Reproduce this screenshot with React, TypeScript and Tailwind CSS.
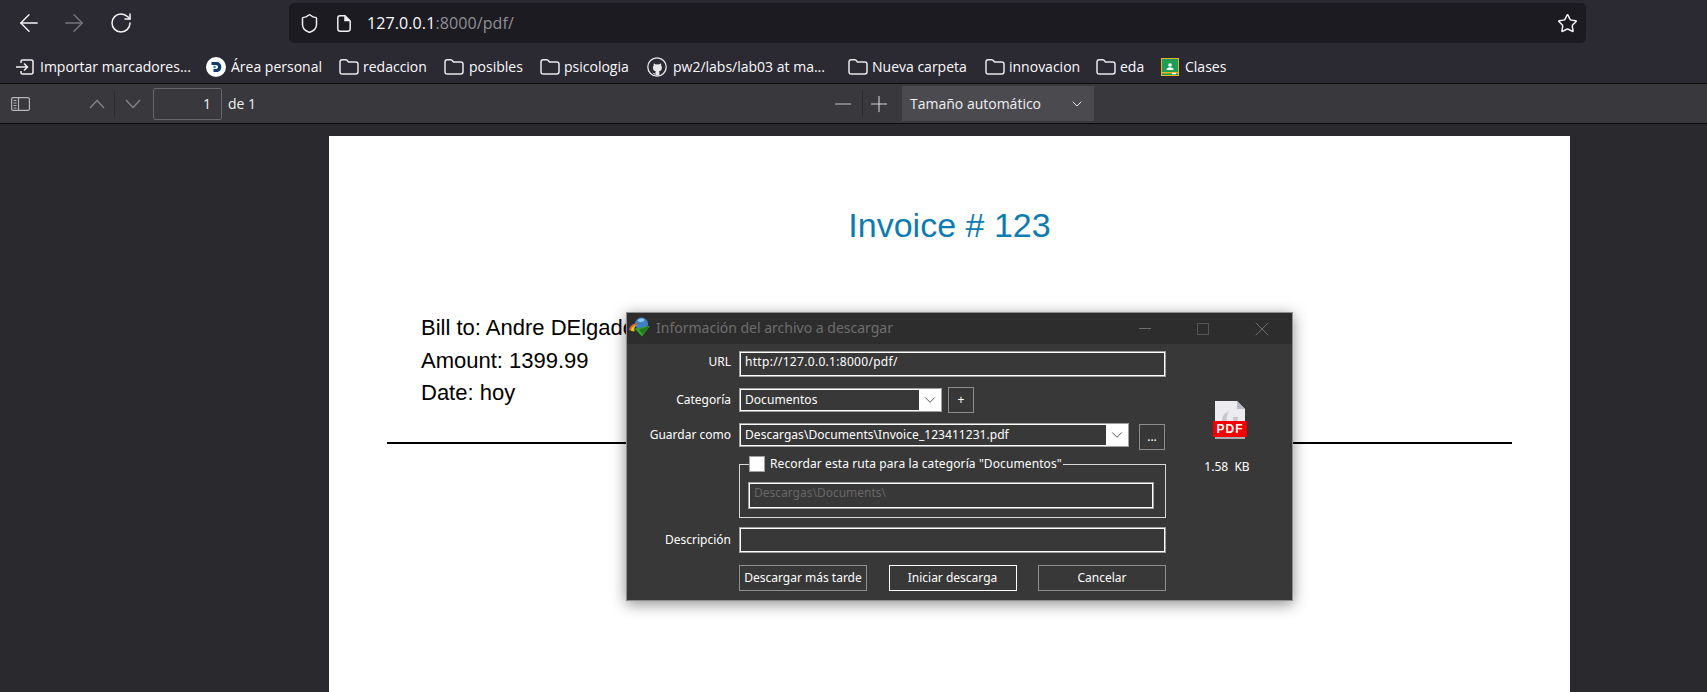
import { ArrowLeft, ArrowRight, ChevronDown, Minus, Plus, RotateCw, Shield, Star, X } from 'lucide-react'

const uiFont = "font-['Open_Sans','Noto_Sans',sans-serif]"
const dlgFont = "font-['Noto_Sans','DejaVu_Sans',sans-serif]"

function FolderIcon() {
  return (
    <svg width="20" height="18" viewBox="0 0 20 18" fill="none" stroke="#e8e8ea" strokeWidth="1.5" className="shrink-0">
      <path d="M1 4c0-1.4.8-2.2 2.2-2.2h3.6c.9 0 1.3.4 1.9 1.2l.8 1.1h7.2c1.4 0 2.3.9 2.3 2.2v7.5c0 1.4-.9 2.2-2.3 2.2H3.2C1.8 16 1 15.2 1 13.8z" />
    </svg>
  )
}

function ImportIcon() {
  return (
    <svg width="18" height="16" viewBox="0 0 18 16" fill="none" stroke="#f0f0f2" strokeWidth="1.5" className="shrink-0">
      <path d="M0 8h11M8 4.5 11.5 8 8 11.5" />
      <path d="M5 4V2.5C5 1.500 5.700 1 6.500 1h8.700c1 0 1.800.7 1.800 1.700v10.600c0 1-.8 1.700-1.800 1.700H6.500C5.700 15 5 14.500 5 13.500V12" />
    </svg>
  )
}

function DIcon() {
  return (
    <svg width="20" height="20" viewBox="0 0 20 20" className="shrink-0">
      <circle cx="10" cy="10" r="10" fill="#fff" />
      <path d="M5.500 5h4.800c3 0 5 2 5 5s-2 5-5 5H7.500v-3h2.500c1.300 0 2-.8 2-2s-.7-2-2-2H5.500z" fill="#123a6b" />
      <circle cx="8.500" cy="10" r="1.300" fill="#2e8bc9" />
    </svg>
  )
}

function GithubIcon() {
  return (
    <svg width="20" height="20" viewBox="0 0 20 20" className="shrink-0">
      <circle cx="10" cy="10" r="9.200" fill="none" stroke="#e8e8ea" strokeWidth="1.300" />
      <path d="M7.600 18.500v-2.600c-2 .4-2.500-1-2.700-1.500M12.400 18.500v-3c0-.6-.2-1-.5-1.300 1.800-.3 3-1.300 3-3.500 0-.9-.3-1.600-.8-2.200.2-.6.100-1.300-.1-1.900-.7 0-1.400.3-2 .8a7 7 0 0 0-3.200 0c-.6-.5-1.300-.8-2-.8-.2.6-.3 1.300-.1 1.900-.5.600-.8 1.300-.8 2.200 0 2.200 1.200 3.200 3 3.500-.3.300-.5.700-.5 1.300v3z" fill="#e8e8ea" />
    </svg>
  )
}

function ClassroomIcon() {
  return (
    <svg width="18" height="18" viewBox="0 0 18 18" className="shrink-0">
      <rect x="0.500" y="0.500" width="17" height="17" fill="#1f9d55" stroke="#e6b422" />
      <rect x="1" y="14" width="16" height="1.500" fill="#e6b422" />
      <circle cx="9" cy="7" r="1.800" fill="#fff" />
      <path d="M5.500 12c0-1.800 1.500-2.700 3.500-2.700s3.500.9 3.500 2.700z" fill="#fff" />
      <rect x="11" y="14.800" width="4" height="1.500" fill="#fff" />
    </svg>
  )
}

function PageIcon() {
  return (
    <svg width="14" height="17" viewBox="0 0 14 17" fill="none" stroke="#f0f0f2" strokeWidth="1.500">
      <path d="M3 .8h5l5.200 5.200v7.500c0 1.500-.9 2.700-2.400 2.700H3C1.600 16.200.8 15 .8 13.500V3C.8 1.700 1.600.8 3 .8z" />
      <path d="M8 1v4.500h5" fill="#f0f0f2" />
    </svg>
  )
}

function SidebarIcon() {
  return (
    <svg width="19" height="14" viewBox="0 0 19 14" fill="none" stroke="#b5b5b8" strokeWidth="1.200">
      <rect x="0.600" y="0.600" width="17.800" height="12.800" rx="1.500" />
      <path d="M7.500 1v12M2.500 3.500h3M2.500 6h3M2.500 8.500h3M2.500 11h3" />
    </svg>
  )
}

function PagerChevron({ up = false }: { up?: boolean }) {
  return (
    <svg width="16" height="10" viewBox="0 0 16 10" fill="none" stroke="#85858a" strokeWidth="1.300" className="shrink-0">
      <path d={up ? 'M1 9l7-7.500L15 9' : 'M1 1l7 7.500L15 1'} />
    </svg>
  )
}

// icono de IDM
function IdmIcon() {
  return (
    <svg width="22" height="20" viewBox="0 0 22 20" className="shrink-0">
      <circle cx="12.500" cy="7" r="6.500" fill="#3f7fc4" />
      <path d="M8.500 3.500c2-2.500 6-2.500 7-.5-1 2-5 3-7 .5z" fill="#8fc7ef" />
      <path d="M0 13C1 7.500 5 6 10 6.500 6 8 4 10 4 14z" fill="#e0662c" />
      <path d="M2 14C2.500 10 5 8.500 7.500 8 5.500 9.500 5 11 5.500 14.500z" fill="#e6c62c" />
      <path d="M5.500 11.500 21 9 13 19.500z" fill="#3aa02f" />
      <path d="M10 12.500 20.500 9.300 14 17.500z" fill="#247a1f" />
    </svg>
  )
}

function PdfFileIcon() {
  return (
    <div className="relative w-[34px] h-[38px]">
      <svg width="34" height="38" viewBox="0 0 34 38" className="absolute inset-0">
        <path d="M2 0h22l8 8v30H2z" fill="#ececf0" />
        <path d="M24 0v8h8z" fill="#b9bcc4" />
        <path d="M9 20c0-5 3-9 7-9 -2 2-2.500 5-2 9zM25 16c0 5-3 8-7 9 2-2 2.500-5 2-9z" fill="#c8c8cc" />
        <rect x="2" y="36" width="30" height="2" fill="#a9a9ae" />
      </svg>
      <div className="absolute left-0 top-[20px] w-[34px] h-[16px] bg-[#f40000] flex items-center justify-center text-white text-[12px] leading-none font-bold tracking-[1px] font-['Liberation_Sans',sans-serif]">
        PDF
      </div>
    </div>
  )
}

const bookmarks = [
  { icon: <ImportIcon />, label: 'Importar marcadores...', box: 'w-[190px] gap-[6px]' },
  { icon: <DIcon />, label: 'Área personal', box: 'w-[133px] gap-[5px]' },
  { icon: <FolderIcon />, label: 'redaccion', box: 'w-[105px] gap-[4px]' },
  { icon: <FolderIcon />, label: 'posibles', box: 'w-[96px] gap-[5px]' },
  { icon: <FolderIcon />, label: 'psicologia', box: 'w-[107px] gap-[4px]' },
  { icon: <GithubIcon />, label: 'pw2/labs/lab03 at ma...', box: 'w-[201px] gap-[6px]' },
  { icon: <FolderIcon />, label: 'Nueva carpeta', box: 'w-[137px] gap-[4px]' },
  { icon: <FolderIcon />, label: 'innovacion', box: 'w-[111px] gap-[4px]' },
  { icon: <FolderIcon />, label: 'eda', box: 'w-[65px] gap-[4px]' },
  { icon: <ClassroomIcon />, label: 'Clases', box: 'w-[80px] gap-[6px]' },
]

function BrowserBar() {
  return (
    <div className={`bg-[#2b2a33] h-[83px] text-[#fbfbfe] ${uiFont}`}>
      <div className="h-[46px] pt-[3px] flex">
        <div className="w-[289px] flex items-center pl-[15px] h-[40px]">
          <ArrowLeft size={28} strokeWidth={1.200} color="#f4f4f6" />
          <ArrowRight size={28} strokeWidth={1.200} color="#77767c" className="ml-[17px]" />
          <RotateCw size={24} strokeWidth={1.500} color="#f4f4f6" className="ml-[21px]" />
        </div>
        <div className="w-[1297px] h-[40px] bg-[#1c1b22] rounded-[5px] flex items-center pl-[10px] pr-[8px]">
          <Shield size={21} strokeWidth={1.700} color="#f0f0f2" />
          <div className="ml-[17px]"><PageIcon /></div>
          <span className="ml-[16px] text-[16px] tracking-[0.1px]">
            127.0.0.1<span className="text-[#8f8f94]">:8000/pdf/</span>
          </span>
          <div className="ml-auto"><Star size={21} strokeWidth={1.700} color="#f4f4f6" /></div>
        </div>
      </div>
      <div className="h-[37px] flex items-center pl-[16px] pt-[4px] text-[14px]">
        {bookmarks.map((b) => (
          <div key={b.label} className={`flex items-center shrink-0 whitespace-nowrap ${b.box}`}>
            {b.icon}
            <span>{b.label}</span>
          </div>
        ))}
      </div>
    </div>
  )
}

function PdfToolbar() {
  return (
    <div className={`h-[41px] bg-[#38383d] border-y border-[#0c0c0d] flex items-center text-[#f0f0f2] text-[14px] ${uiFont}`}>
      <div className="ml-[11px] w-[78px]"><SidebarIcon /></div>
      <PagerChevron up />
      <div className="w-px h-[25px] bg-[#2a2a2e] ml-[9px] mr-[10px]" />
      <PagerChevron />
      <div className="ml-[12px] w-[69px] h-[32px] bg-[#38383d] border border-[#66666a] rounded-[2px] flex items-center justify-end pr-[10px]">1</div>
      <span className="w-[608px] pl-[6px]">de 1</span>
      <Minus size={26} strokeWidth={1} color="#c4c4c7" />
      <div className="w-px h-[25px] bg-[#2a2a2e] ml-[6px] mr-[3px]" />
      <Plus size={26} strokeWidth={1} color="#d6d6d8" />
      <div className="ml-[10px] w-[192px] h-[35px] bg-[#4a4a4f] flex items-center pl-[8px] pr-[9px] justify-between">
        <span>Tamaño automático</span>
        <ChevronDown size={16} strokeWidth={1.500} color="#f0f0f2" />
      </div>
    </div>
  )
}

function Field({ className = '', children }: { className?: string; children?: React.ReactNode }) {
  return (
    <div className={`border border-[#a0a0a0] bg-white p-px ${className}`}>
      <div className="bg-[#383838] h-full w-full px-[4px] leading-[16px] pt-px">{children}</div>
    </div>
  )
}

function Combo({ className, text }: { className: string; text: string }) {
  return (
    <div className={`border border-[#a0a0a0] bg-white p-px flex ${className}`}>
      <div className="bg-[#383838] h-full grow px-[4px] leading-[20px] tracking-[0.05px]">{text}</div>
      <div className="w-[21px] h-full flex items-center justify-center">
        <ChevronDown size={18} strokeWidth={1} color="#222" />
      </div>
    </div>
  )
}

function DlgButton({ className = '', children }: { className?: string; children: React.ReactNode }) {
  return <div className={`border border-[#8e8e8e] h-[26px] flex items-center justify-center ${className}`}>{children}</div>
}

function Dialog() {
  return (
    <div className={`absolute left-[626px] top-[312px] w-[667px] h-[289px] bg-[#383838] border border-[#8f8f8f] shadow-[0_3px_14px_rgba(0,0,0,0.45)] text-white text-[12px] ${dlgFont}`}>
      <div className="h-[31px] bg-[#2d2d2d] flex items-center relative">
        <div className="absolute left-[2px] top-[4px]"><IdmIcon /></div>
        <span className="ml-[29px] -mt-[2px] text-[14px] text-[#6e6e6e]">Información del archivo a descargar</span>
        <div className="ml-auto flex items-center text-[#6e6e6e]">
          <div className="w-[12px] h-px bg-[#6e6e6e] mr-[46px]" />
          <div className="w-[12px] h-[12px] border border-[#555] mr-[41px]" />
          <X size={24} strokeWidth={1} className="mr-[18px]" />
        </div>
      </div>
      <div className="flex pt-[7px]">
        <div className="w-[539px] flex flex-col">
          <div className="flex">
            <div className="w-[104px] text-right leading-[22px]">URL</div>
            <Field className="ml-[8px] w-[427px] h-[26px] tracking-[0.3px]">http://127.0.0.1:8000/pdf/</Field>
          </div>
          <div className="flex mt-[10px] items-center">
            <div className="w-[104px] text-right">Categoría</div>
            <Combo className="ml-[8px] w-[203px] h-[24px]" text="Documentos" />
            <DlgButton className="ml-[6px] w-[26px]">+</DlgButton>
          </div>
          <div className="flex mt-[10px] items-start">
            <div className="w-[104px] text-right leading-[24px]">Guardar como</div>
            <Combo className="ml-[8px] w-[390px] h-[24px]" text="Descargas\Documents\Invoice_123411231.pdf" />
            <DlgButton className="ml-[10px] mt-px w-[26px]">...</DlgButton>
          </div>
          <fieldset className="ml-[112px] mt-[6px] w-[427px] h-[62px] border border-[#d8d8d8] px-[8px] pb-[8px]">
            <legend className="flex items-center h-[16px] pr-px ml-px">
              <div className="w-[16px] h-[16px] bg-white border border-[#a0a0a0]" />
              <span className="ml-[5px] tracking-[0.1px]">Recordar esta ruta para la categoría "Documentos"</span>
            </legend>
            <Field className="mt-[10px] w-[406px] h-[27px] text-[#666]">Descargas\Documents\</Field>
          </fieldset>
          <div className="flex mt-[9px] items-center">
            <div className="w-[104px] text-right">Descripción</div>
            <Field className="ml-[8px] w-[427px] h-[26px]" />
          </div>
          <div className="flex ml-[112px] mt-[12px] justify-between w-[427px]">
            <DlgButton className="w-[128px]">Descargar más tarde</DlgButton>
            <DlgButton className="w-[128px] border-white">Iniciar descarga</DlgButton>
            <DlgButton className="w-[128px]">Cancelar</DlgButton>
          </div>
        </div>
        <div className="w-[126px] flex flex-col items-center pt-[50px]">
          <div className="ml-[2px]"><PdfFileIcon /></div>
          <div className="mt-[19px] -ml-[4px] whitespace-pre">1.58  KB</div>
        </div>
      </div>
    </div>
  )
}

function PdfPage() {
  return (
    <div className="w-[1241px] ml-[329px] h-[568px] bg-white px-[58px] text-black font-['Liberation_Sans',Arial,sans-serif]">
      <h1 className="pt-[69px] text-center text-[34px] leading-[40px] text-[#0e7cb0]">Invoice # 123</h1>
      <div className="pl-[34px] mt-[67px] text-[22px] leading-[32.500px]">
        <p>Bill to: Andre DElgado</p>
        <p>Amount: 1399.99</p>
        <p>Date: hoy</p>
      </div>
      <hr className="mt-[32px] border-t-2 border-black" />
    </div>
  )
}

export default function App() {
  return (
    <div className="relative w-[1707px] h-[692px] overflow-hidden bg-[#2a2a2e]">
      <BrowserBar />
      <PdfToolbar />
      <div className="pt-[12px]">
        <PdfPage />
      </div>
      <Dialog />
    </div>
  )
}
